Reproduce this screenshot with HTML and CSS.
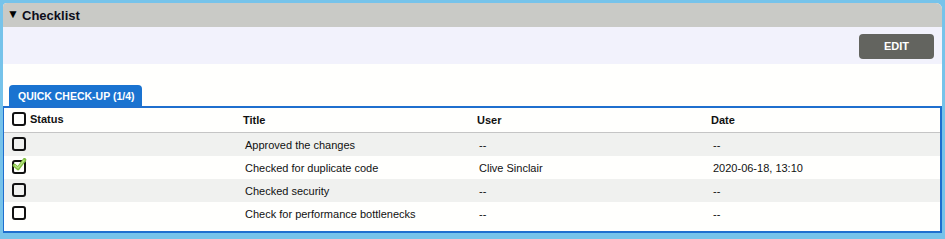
FILE: index.html
```html
<!DOCTYPE html>
<html>
<head>
<meta charset="utf-8">
<link rel="stylesheet" href="styles.css">
</head>
<body>
<div class="panel">
  <div class="panel-head"><span class="caret">&#9660;</span><span class="panel-title">Checklist</span></div>
  <div class="toolbar"><button class="edit-btn">EDIT</button></div>
  <div class="content">
    <div class="tabs"><div class="tab">QUICK CHECK-UP (1/4)</div></div>
    <div class="table-box">
      <table class="grid">
        <colgroup><col class="c1"><col class="c2"><col class="c3"><col class="c4"></colgroup>
        <thead>
          <tr>
            <th class="status-h"><span class="cb"></span>Status</th>
            <th>Title</th>
            <th>User</th>
            <th>Date</th>
          </tr>
        </thead>
        <tbody>
          <tr class="odd">
            <td class="status"><span class="cb"></span></td>
            <td>Approved the changes</td>
            <td>--</td>
            <td>--</td>
          </tr>
          <tr>
            <td class="status"><span class="cb checked"><svg width="16" height="16" viewBox="0 0 16 16"><path d="M2.5 7.5 L6 10.5 L12.5 1.8" fill="none" stroke="#7dbd3e" stroke-width="3.6" stroke-linecap="round" stroke-linejoin="round"/><path d="M3 7.6 L6 10 L12 2.3" fill="none" stroke="#b9e382" stroke-width="1.4" stroke-linecap="round" stroke-linejoin="round"/></svg></span></td>
            <td>Checked for duplicate code</td>
            <td>Clive Sinclair</td>
            <td>2020-06-18, 13:10</td>
          </tr>
          <tr class="odd">
            <td class="status"><span class="cb"></span></td>
            <td>Checked security</td>
            <td>--</td>
            <td>--</td>
          </tr>
          <tr>
            <td class="status"><span class="cb"></span></td>
            <td>Check for performance bottlenecks</td>
            <td>--</td>
            <td>--</td>
          </tr>
        </tbody>
      </table>
    </div>
  </div>
</div>
</body>
</html>
```

FILE: styles.css
```css
html, body {
  margin: 0;
  padding: 0;
}
body {
  background: #76c3ea;
  padding: 3px 3px 0 3px;
  font-family: "Liberation Sans", Arial, sans-serif;
  color: #111;
  height: 239px;
  box-sizing: border-box;
  overflow: hidden;
}
.panel {
  width: 939px;
  background: #fffffd;
  border-radius: 4px 6px 0 0;
  overflow: hidden;
}
.panel-head {
  height: 24px;
  background: #c9cac6;
  display: flex;
  align-items: center;
  padding-left: 4px;
}
.caret {
  font-size: 12px;
  width: 15px;
  color: #000;
  position: relative;
  top: -1px;
}
.panel-title {
  font-size: 13px;
  font-weight: bold;
  color: #0d0d1a;
}
.toolbar {
  height: 37px;
  background: #f2f2fc;
  display: flex;
  justify-content: flex-end;
  align-items: center;
  padding-right: 8px;
}
.edit-btn {
  width: 75px;
  height: 25px;
  margin-top: 1px;
  background: #63645f;
  color: #fff;
  border: none;
  border-radius: 4px;
  font-family: "Liberation Sans", Arial, sans-serif;
  font-size: 11px;
  font-weight: bold;
  padding: 0;
}
.content {
  padding-top: 21px;
}
.tabs {
  display: flex;
  padding-left: 6px;
}
.tab {
  height: 21px;
  background: #1a73d0;
  color: #fff;
  font-size: 10.5px;
  font-weight: bold;
  border-radius: 4px 4px 0 0;
  padding: 0 8px 0 9px;
  display: flex;
  align-items: center;
  white-space: nowrap;
}
.table-box {
  border: 2px solid #1f6fce;
  border-left-width: 1px;
  box-sizing: border-box;
  height: 127px;
  background: #fffffd;
}
.grid {
  width: 100%;
  border-collapse: collapse;
  table-layout: fixed;
  font-size: 11px;
}
.grid th {
  text-align: left;
  font-weight: bold;
  height: 24px;
  padding: 0 0 0 5px;
  border-bottom: 1px solid #c5c5c5;
  vertical-align: middle;
}
.grid td {
  height: 23px;
  padding: 0 0 0 7px;
  vertical-align: middle;
}
.grid tr.odd td {
  background: #f0f1ef;
}
.grid th.status-h {
  padding-left: 8px;
}
.grid td.status {
  padding-left: 8px;
}
.status-h {
  white-space: nowrap;
}
.cb {
  display: inline-block;
  width: 14px;
  height: 14px;
  border: 2px solid #111;
  border-radius: 3px;
  box-sizing: border-box;
  vertical-align: middle;
  margin-right: 4px;
  position: relative;
  top: -1px;
}
.cb.checked svg {
  position: absolute;
  left: -2px;
  top: -4px;
}
```
